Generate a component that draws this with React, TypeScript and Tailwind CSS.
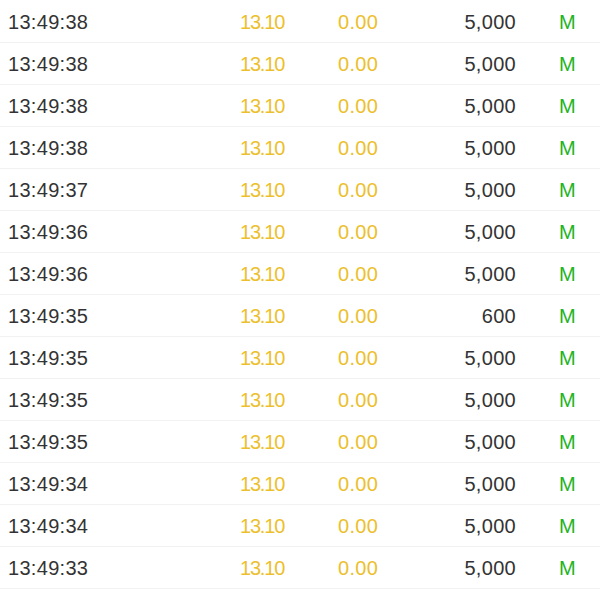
const TRADES = [
  { time: "13:49:38", price: "13.10", change: "0.00", vol: "5,000" },
  { time: "13:49:38", price: "13.10", change: "0.00", vol: "5,000" },
  { time: "13:49:38", price: "13.10", change: "0.00", vol: "5,000" },
  { time: "13:49:38", price: "13.10", change: "0.00", vol: "5,000" },
  { time: "13:49:37", price: "13.10", change: "0.00", vol: "5,000" },
  { time: "13:49:36", price: "13.10", change: "0.00", vol: "5,000" },
  { time: "13:49:36", price: "13.10", change: "0.00", vol: "5,000" },
  { time: "13:49:35", price: "13.10", change: "0.00", vol: "600" },
  { time: "13:49:35", price: "13.10", change: "0.00", vol: "5,000" },
  { time: "13:49:35", price: "13.10", change: "0.00", vol: "5,000" },
  { time: "13:49:35", price: "13.10", change: "0.00", vol: "5,000" },
  { time: "13:49:34", price: "13.10", change: "0.00", vol: "5,000" },
  { time: "13:49:34", price: "13.10", change: "0.00", vol: "5,000" },
  { time: "13:49:33", price: "13.10", change: "0.00", vol: "5,000" },
];

const App = () => {
  return (
    <div
      className="w-[600px] h-[600px] bg-white overflow-hidden pt-[1px]"
      style={{ fontFamily: '"Liberation Sans", Arial, sans-serif' }}
    >
      {TRADES.map((row, i) => (
        <div
          key={i}
          className="h-[42px] flex items-center border-b border-[#f2f2f2] text-[20px] tracking-[0.3px]"
        >
          <span className="w-[240px] pl-[8px] text-[#333333]">{row.time}</span>
          <span className="w-[98px] text-[#ecc02c] tracking-[-1.2px]">{row.price}</span>
          <span className="w-[100px] text-[#ecc02c]">{row.change}</span>
          <span className="w-[78px] text-right text-[#333333]">{row.vol}</span>
          <span className="ml-[43px] text-[#22b422]">M</span>
        </div>
      ))}
    </div>
  );
};

export default App;
